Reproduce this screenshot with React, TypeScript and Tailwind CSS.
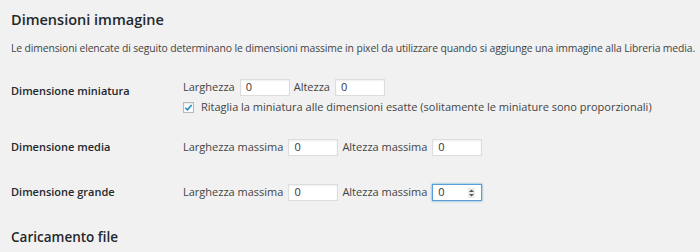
import React from "react";

function NumField({ focused = false }: { focused?: boolean }) {
  return (
    <div
      className={
        "relative flex items-center w-[50px] h-[17px] bg-white pl-[5px] text-[11px] text-[#333] " +
        (focused
          ? "border border-[#5b9dd9] shadow-[0_0_2px_rgba(30,140,190,0.8)]"
          : "border border-[#ddd] shadow-[inset_0_1px_2px_rgba(0,0,0,0.07)]")
      }
    >
      <span>0</span>
      {focused && (
        <svg
          className="absolute right-[6px] top-[3px]"
          width="7"
          height="10"
          viewBox="0 0 7 10"
        >
          <rect x="0" y="0" width="7" height="10" fill="#ececec" />
          <path d="M1 4 L3.5 1.5 L6 4 Z" fill="#555" />
          <path d="M1 6 L3.5 8.5 L6 6 Z" fill="#555" />
        </svg>
      )}
    </div>
  );
}

function Checkbox() {
  return (
    <div className="flex items-center justify-center w-[11px] h-[11px] bg-white border border-[#b4b9be] shadow-[inset_0_1px_2px_rgba(0,0,0,0.1)]">
      <svg width="10" height="9" viewBox="0 0 10 9">
        <path
          d="M1.5 4.8 L3.8 7 L8.5 1.8"
          fill="none"
          stroke="#1e8cbe"
          strokeWidth="1.8"
        />
      </svg>
    </div>
  );
}

export default function App() {
  return (
    <div className="w-[700px] h-[252px] overflow-hidden bg-[#f1f1f1] pl-[11px] text-[#444] font-['Open_Sans',sans-serif] text-[11px]">
      <h2 className="pt-[10px] leading-[20px] text-[14.5px] font-semibold text-[#23282d]">
        Dimensioni immagine
      </h2>
      <p className="mt-[10px] leading-[16px] text-[10.4px] tracking-[-0.13px] whitespace-nowrap">
        Le dimensioni elencate di seguito determinano le dimensioni massime in
        pixel da utilizzare quando si aggiunge una immagine alla Libreria media.
      </p>

      {/* Miniatura */}
      <div className="flex mt-[23px]">
        <div className="w-[172px] pt-[3px] leading-[17px] font-semibold text-[#23282d]">
          Dimensione miniatura
        </div>
        <div className="flex flex-col">
          <div className="flex items-center h-[17px]">
            <span className="mr-[5px]">Larghezza</span>
            <NumField />
            <span className="ml-[4px] mr-[5px]">Altezza</span>
            <NumField />
          </div>
          <label className="flex items-center h-[15px] mt-[4px]">
            <Checkbox />
            <span className="ml-[7px]">
              Ritaglia la miniatura alle dimensioni esatte (solitamente le
              miniature sono proporzionali)
            </span>
          </label>
        </div>
      </div>

      {/* Media */}
      <div className="flex items-center mt-[24px] h-[17px]">
        <div className="w-[172px] font-semibold text-[#23282d]">
          Dimensione media
        </div>
        <span className="mr-[5px]">Larghezza massima</span>
        <NumField />
        <span className="ml-[4px] mr-[5px]">Altezza massima</span>
        <NumField />
      </div>

      {/* Grande */}
      <div className="flex items-center mt-[28px] h-[17px]">
        <div className="w-[172px] font-semibold text-[#23282d]">
          Dimensione grande
        </div>
        <span className="mr-[5px]">Larghezza massima</span>
        <NumField />
        <span className="ml-[4px] mr-[5px]">Altezza massima</span>
        <NumField focused />
      </div>

      <h2 className="mt-[26px] leading-[20px] text-[13.5px] font-semibold text-[#23282d]">
        Caricamento file
      </h2>
    </div>
  );
}
